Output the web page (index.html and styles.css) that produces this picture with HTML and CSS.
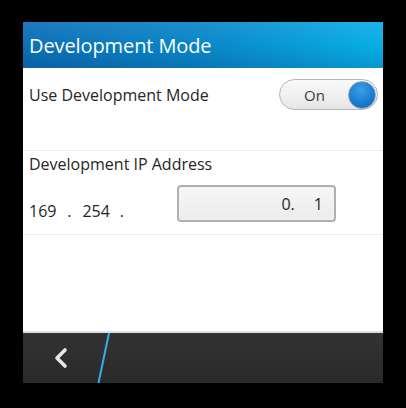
FILE: index.html
```html
<!DOCTYPE html>
<html>
<head>
<meta charset="utf-8">
<link rel="stylesheet" href="styles.css">
</head>
<body>
<div class="screen">
  <header class="titlebar">Development Mode</header>
  <main class="content">
    <section class="row row-toggle">
      <span class="label">Use Development Mode</span>
      <div class="toggle"><span class="toggle-text">On</span><span class="knob"></span></div>
    </section>
    <section class="row row-ip">
      <div class="label">Development IP Address</div>
      <div class="ip-line">
        <span class="octet">169</span><span class="dot dot-a">.</span><span class="octet">254</span><span class="dot dot-b">.</span>
        <div class="ip-input"><span>0.</span><span class="last">1</span></div>
      </div>
    </section>
  </main>
  <footer class="actionbar">
    <div class="back">
      <svg width="16" height="22" viewBox="0 0 16 22"><path d="M12 3 L4 11 L12 19" fill="none" stroke="#e8e8e8" stroke-width="3.6" stroke-linecap="round" stroke-linejoin="round"/></svg>
    </div>
    <svg class="divider" width="14" height="50" viewBox="0 0 14 50"><line x1="12" y1="0" x2="1.5" y2="50" stroke="#2fb0e6" stroke-width="2"/></svg>
  </footer>
</div>
</body>
</html>
```
FILE: styles.css
```css
html, body {
  margin: 0;
  padding: 0;
  background: #000;
  width: 406px;
  height: 408px;
  overflow: hidden;
}
.screen {
  margin: 22px 0 0 23px;
  width: 360px;
  height: 361px;
  display: flex;
  flex-direction: column;
  font-family: "Open Sans", "Noto Sans", sans-serif;
  background: #fff;
}
.titlebar {
  height: 46px;
  box-sizing: border-box;
  padding: 10px 0 0 6px;
  color: #fff;
  font-size: 20px;
  line-height: 28px;
  letter-spacing: -0.1px;
  background:
    linear-gradient(180deg, rgba(255,255,255,0.08) 0%, rgba(0,0,0,0) 50%, rgba(0,0,40,0.12) 100%),
    linear-gradient(90deg, #0c6fb6 0%, #0a87c9 50%, #09aee6 100%);
}
.content {
  flex: 1;
  display: flex;
  flex-direction: column;
  background: #fff;
  border-bottom: 2px solid #dedede;
}
.row {
  border-bottom: 1px solid #ececec;
  padding: 0 6px;
  color: #262626;
  font-size: 16px;
}
.row-toggle {
  height: 83px;
  box-sizing: border-box;
  display: flex;
  justify-content: space-between;
  align-items: flex-start;
  padding-top: 11px;
  padding-right: 5px;
}
.row-toggle .label {
  line-height: 32px;
}
.toggle {
  width: 99px;
  height: 31px;
  box-sizing: border-box;
  border: 1px solid #b4b4b4;
  border-radius: 16px;
  background: linear-gradient(180deg, #fafafa 0%, #e6e6e6 100%);
  display: flex;
  align-items: center;
  justify-content: space-between;
  padding: 0 1px 0 24px;
}
.toggle-text {
  color: #3a3a3a;
  font-size: 15px;
}
.knob {
  width: 28px;
  height: 28px;
  box-sizing: border-box;
  border-radius: 50%;
  border: 1px solid #8aa7bf;
  background: radial-gradient(circle at 45% 30%, #3d9fe4 0%, #1a7ed0 55%, #0b64b3 100%);
}
.row-ip {
  height: 84px;
  box-sizing: border-box;
  padding-top: 2px;
}
.row-ip .label {
  line-height: 22px;
}
.ip-line {
  display: flex;
  align-items: center;
  margin-top: 10px;
}
.octet, .dot {
  line-height: 20px;
  margin-top: 14px;
}
.dot {
  text-align: center;
}
.dot-a { width: 26px; }
.dot-b { width: 24px; }
.ip-input {
  margin-left: 43px;
  width: 159px;
  height: 37px;
  box-sizing: border-box;
  border: 2px solid #b0b0b0;
  border-radius: 4px;
  background: linear-gradient(180deg, #f7f7f7 0%, #ebebeb 100%);
  box-shadow: inset 0 0 0 1px #f2f2f2;
  display: flex;
  justify-content: flex-end;
  align-items: center;
  padding-right: 11px;
  color: #262626;
  font-size: 16px;
}
.ip-input .last {
  margin-left: 19px;
}
.actionbar {
  height: 50px;
  display: flex;
  align-items: stretch;
  background: linear-gradient(180deg, #323232 0%, #2a2a2a 100%);
}
.back {
  width: 74px;
  display: flex;
  align-items: center;
  justify-content: center;
  padding-left: 2px;
  box-sizing: border-box;
}
.divider {
  display: block;
}
```
